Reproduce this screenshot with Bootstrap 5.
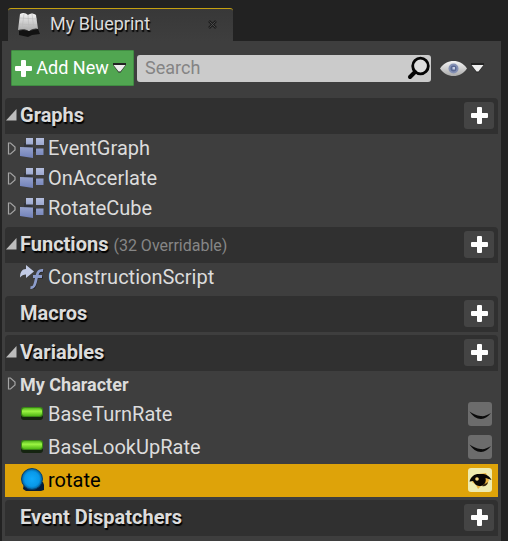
<!DOCTYPE html>
<html lang="en">
<head>
<meta charset="utf-8">
<meta name="viewport" content="width=device-width, initial-scale=1">
<title>My Blueprint</title>
<link href="https://cdn.jsdelivr.net/npm/bootstrap@5.3.0/dist/css/bootstrap.min.css" rel="stylesheet">
<style>
  body { background: #222; color: #dcdcdc; font: 20px/24px Roboto, sans-serif; }
  button { font: inherit; color: inherit; border: 0; padding: 0; background: none; }
  svg { display: block; flex: none; }
  .dock { padding: 8px 7px 0 2px; }
  .dock-tab { width: 225px; height: 33px; margin-left: 6px; background: linear-gradient(#383838, #3e3e3e); border-top: 1px solid #c4a010; border-radius: 3px 3px 0 0; padding: 0 16px 2px 9px; gap: 9px; font-size: 18px; }
  .shadowed { text-shadow: 1px 2px 1px #000; }
  .panel { background: #3e3e3e; padding: 9px 3px 4px; }
  .tools { padding: 0 14px 12px 6px; gap: 3px; font-size: 18px; }
  .add-new { height: 36px; width: 123px; background: #51a651; color: #fff; border: 1px solid #408c42; border-radius: 1px; padding: 0 7px 0 3px; }
  .search-box { height: 27px; background: #cbcbcb; border-radius: 3px; padding: 0 1px 0 8px; }
  .search-box input { border: 0; background: none; outline: 0; padding: 0; min-width: 0; color: #222; }
  .search-box input::placeholder { color: #848484; opacity: 1; }
  .view-options { gap: 4px; margin-left: 6px; }
  .tree { gap: 3px; }
  .section-head { height: 36px; background: #303030; border-radius: 4px 4px 0 0; padding: 0 4px 1px 0; }
  .section-head h2 { font-size: 20px; line-height: 24px; font-weight: 700; margin: 0; padding-bottom: 1px; }
  .overrides { font-size: 16px; color: #868686; margin-left: 5px; padding-top: 2px; }
  .toggle { width: 15px; flex: none; }
  .toggle-open { padding-bottom: 1px; }
  .add-item { width: 30px; height: 27px; background: #444; border-radius: 3px; }
  .item { height: 30px; padding-bottom: 2px; }
  .item-var { height: 33px; padding: 0 6px 2px 0; }
  .item-icon { width: 24px; margin-right: 4px; }
  .group-name { height: 27px; font-size: 18px; font-weight: 700; }
  .group-name .toggle { padding-bottom: 3px; }
  .visible-btn { width: 24px; height: 24px; background: #6c6c6c; border-radius: 3px; }
  .picked { background: #dea309; color: #000; }
  .picked .visible-btn { background: #eeebb0; }
</style>
</head>
<body>
<svg width="0" height="0" class="position-absolute" aria-hidden="true">
  <defs>
    <linearGradient id="blue" x2="0" y2="1"><stop stop-color="#b4bedd"/><stop offset="1" stop-color="#7080b8"/></linearGradient>
    <linearGradient id="silver" x2="0" y2="1"><stop stop-color="#f4f4f4"/><stop offset="1" stop-color="#aaa"/></linearGradient>
    <linearGradient id="green" x2="0" y2="1"><stop stop-color="#58b821"/><stop offset=".4" stop-color="#9cf543"/><stop offset="1" stop-color="#50b815"/></linearGradient>
    <radialGradient id="sphere"><stop stop-color="#11aafa"/><stop offset=".7" stop-color="#0898e8"/><stop offset="1" stop-color="#045e99"/></radialGradient>
    <symbol id="plus" viewBox="0 0 17 17"><path d="M7 0h3q1 0 1 1v5h5q1 0 1 1v3q0 1-1 1h-5v5q0 1-1 1H7q-1 0-1-1v-5H1q-1 0-1-1V7q0-1 1-1h5V1q0-1 1-1z" fill="#fff"/></symbol>
    <symbol id="open" viewBox="0 0 12 12"><path d="M1 11.500 11.500 0v11.500z" fill="#bcbcbc"/></symbol>
    <symbol id="shut" viewBox="0 0 13 13"><path d="M3.500 1v11h2l4.500-4V5L5.500 1z" fill="none" stroke="#a4a4a4" stroke-width="1.200"/></symbol>
    <symbol id="down" viewBox="0 0 13 10"><path d="M0 0h13v2L7.500 9.500h-2L0 2z" fill="#222"/><path d="M.5 2h12L7.500 8.500h-2z" fill="#eee"/></symbol>
    <symbol id="graph" viewBox="0 0 24 20"><path d="M4 5h5l4 5h6v4h-7l-4-4H4z" fill="#30333b"/><path d="M6 0h7v6.500H6zM16 0h8v7h-8zM16 10.500h7.500V17H16zM0 9l13 .5V20L0 18z" fill="url(#blue)"/></symbol>
    <symbol id="closed-eye" viewBox="0 0 24 24"><path d="M1.500 9.500c3 4.500 7 7.500 11.500 7.500 4 0 7-2.500 10-6-4 2.500-7 3.500-10.500 3-4-.5-7-2-11-4.500z" fill="#0b0b0b"/></symbol>
    <symbol id="pill" viewBox="0 0 24 13"><rect x="1" y="2" width="22" height="11" rx="3" fill="#152410"/><rect x="1" width="22" height="10" rx="3" fill="#3a8716"/><rect x="2" y="1" width="20" height="8" rx="3" fill="url(#green)"/></symbol>
  </defs>
</svg>

<main class="dock d-flex flex-column min-vh-100">
  <div class="dock-tab d-flex align-items-center">
    <svg width="24" height="25" viewBox="0 0 24 25"><path d="M2 19l4-1 6 1 9-2 2 5-8 1-4 2-9-2z" fill="#121212"/><path d="M3 2c3-2 6-1 8 1 3-2 5-2 8 0l2 14c-4-1-6 0-9 2-3-2-7-2-11-1z" fill="url(#silver)"/><path d="M11 3l1 16M7 2 5 17M15 2l2 15M3 6l17 1M2 12l18 1" stroke="#bbb" stroke-width=".6" fill="none"/></svg>
    <span class="shadowed">My Blueprint</span>
    <button type="button" class="ms-auto" aria-label="Close"><svg width="9" height="9" viewBox="0 0 9 9"><path d="M1 1l7 7M8 1 1 8" stroke="#1d1d1d" stroke-width="2.500"/><path d="M1.500 1.500l6 6M7.500 1.500l-6 6" stroke="#555" stroke-width=".8"/></svg></button>
  </div>

  <div class="panel flex-grow-1">
    <div class="tools d-flex align-items-center">
      <button type="button" class="add-new d-flex align-items-center justify-content-between flex-shrink-0"><svg width="17" height="17"><use href="#plus"/></svg><span class="text-nowrap">Add New</span><svg width="13" height="10"><use href="#down"/></svg></button>
      <div class="search-box d-flex align-items-center flex-grow-1">
        <input type="text" class="flex-grow-1" placeholder="Search" aria-label="Search">
        <svg width="23" height="24" viewBox="0 0 23 24"><circle cx="13.500" cy="10" r="7.800" fill="#ddd" stroke="#050505" stroke-width="2.800"/><path d="M8 16l-5 5" stroke="#050505" stroke-width="4" stroke-linecap="round"/></svg>
      </div>
      <button type="button" class="view-options d-flex align-items-center" aria-label="View options">
        <svg width="27" height="17" viewBox="0 0 27 17"><path d="M0 8.500C4 3 8 1 13.500 1S23 3 27 8.500C23 14 19 16 13.500 16S4 14 0 8.500z" fill="url(#silver)"/><circle cx="13.500" cy="8.500" r="5" fill="#8490b4"/><circle cx="13.500" cy="8.500" r="3" fill="#5a6993"/><path d="M12.500 7h2.500v2.500h-2.500z" fill="#c6cee2"/></svg>
        <svg width="13" height="10"><use href="#down"/></svg>
      </button>
    </div>

    <div class="tree d-flex flex-column">
      <section>
        <div class="section-head d-flex align-items-center">
          <button type="button" class="toggle toggle-open" aria-label="Collapse Graphs"><svg width="12" height="12"><use href="#open"/></svg></button>
          <h2 class="shadowed">Graphs</h2>
          <button type="button" class="add-item ms-auto d-flex align-items-center justify-content-center" aria-label="Add graph"><svg width="17" height="17"><use href="#plus"/></svg></button>
        </div>
        <div class="item d-flex align-items-center">
          <button type="button" class="toggle" aria-label="Expand EventGraph"><svg width="13" height="13"><use href="#shut"/></svg></button>
          <svg class="item-icon" height="20"><use href="#graph"/></svg><span>EventGraph</span>
        </div>
        <div class="item d-flex align-items-center">
          <button type="button" class="toggle" aria-label="Expand OnAccerlate"><svg width="13" height="13"><use href="#shut"/></svg></button>
          <svg class="item-icon" height="20"><use href="#graph"/></svg><span>OnAccerlate</span>
        </div>
        <div class="item d-flex align-items-center">
          <button type="button" class="toggle" aria-label="Expand RotateCube"><svg width="13" height="13"><use href="#shut"/></svg></button>
          <svg class="item-icon" height="20"><use href="#graph"/></svg><span>RotateCube</span>
        </div>
      </section>

      <section>
        <div class="section-head d-flex align-items-center">
          <button type="button" class="toggle toggle-open" aria-label="Collapse Functions"><svg width="12" height="12"><use href="#open"/></svg></button>
          <h2 class="shadowed">Functions</h2><span class="overrides">(32 Overridable)</span>
          <button type="button" class="add-item ms-auto d-flex align-items-center justify-content-center" aria-label="Add function"><svg width="17" height="17"><use href="#plus"/></svg></button>
        </div>
        <div class="item d-flex align-items-center">
          <span class="toggle"></span>
          <svg class="item-icon" height="24" viewBox="0 0 24 24"><path d="M0 12.500C0 7 2 4 6 4V0l8 6.500L6 13V9.500c-2.500 0-4.500 1-6 3z" fill="#c2cbe6"/><path d="M10 22.500c3 .5 4-1 5-5.500l1.500-6.500C17.500 6 19 5 22.500 5.500M13 11.500h9" transform="translate(1 1)" fill="none" stroke="#222" stroke-width="2"/><path d="M10.500 22.500c3 .5 4-1 5-5.500l1.500-6.500C18 6 19.500 5 23 5.500M13 11.500h9" fill="none" stroke="#8c9cca" stroke-width="2.800"/></svg><span>ConstructionScript</span>
        </div>
      </section>

      <section>
        <div class="section-head d-flex align-items-center">
          <span class="toggle"></span>
          <h2 class="shadowed">Macros</h2>
          <button type="button" class="add-item ms-auto d-flex align-items-center justify-content-center" aria-label="Add macro"><svg width="17" height="17"><use href="#plus"/></svg></button>
        </div>
      </section>

      <section>
        <div class="section-head d-flex align-items-center">
          <button type="button" class="toggle toggle-open" aria-label="Collapse Variables"><svg width="12" height="12"><use href="#open"/></svg></button>
          <h2 class="shadowed">Variables</h2>
          <button type="button" class="add-item ms-auto d-flex align-items-center justify-content-center" aria-label="Add variable"><svg width="17" height="17"><use href="#plus"/></svg></button>
        </div>
        <div class="group-name d-flex align-items-center">
          <button type="button" class="toggle" aria-label="Expand My Character"><svg width="13" height="13"><use href="#shut"/></svg></button><span>My Character</span>
        </div>
        <div class="item-var d-flex align-items-center">
          <span class="toggle"></span>
          <svg class="item-icon" height="13"><use href="#pill"/></svg><span>BaseTurnRate</span>
          <button type="button" class="visible-btn ms-auto" aria-label="Show BaseTurnRate"><svg width="24" height="24"><use href="#closed-eye"/></svg></button>
        </div>
        <div class="item-var d-flex align-items-center">
          <span class="toggle"></span>
          <svg class="item-icon" height="13"><use href="#pill"/></svg><span>BaseLookUpRate</span>
          <button type="button" class="visible-btn ms-auto" aria-label="Show BaseLookUpRate"><svg width="24" height="24"><use href="#closed-eye"/></svg></button>
        </div>
        <div class="item-var picked d-flex align-items-center">
          <span class="toggle"></span>
          <svg class="item-icon" height="23" viewBox="0 0 24 23"><path d="M4 15l19-1 1 3v5l-3 1H6l-3-2z" fill="#071c38"/><circle cx="12" cy="11" r="10.500" fill="url(#sphere)" stroke="#07416d"/></svg><span>rotate</span>
          <button type="button" class="visible-btn ms-auto" aria-label="Hide rotate"><svg width="24" height="24" viewBox="0 0 24 24"><path d="M4 14l4 3 2 4 3-3 6-1 2-5-3-7-8 1z" fill="#eab440"/><path d="M1.500 13.500C3 8 7 5.500 12 6c5-.5 9 1 11.500 6-3-1-4.500-2-6-2 1 4-1 7-4.500 8-5 0-6-2-8-5l-3 .5z" fill="#080603"/><circle cx="9" cy="11" r="1.800" fill="#f6d880"/><path d="M14 18c1-2 4-2 6-4-.5 3-3 5-6 4z" fill="#302410"/></svg></button>
        </div>
      </section>

      <section>
        <div class="section-head d-flex align-items-center">
          <span class="toggle"></span>
          <h2 class="shadowed">Event Dispatchers</h2>
          <button type="button" class="add-item ms-auto d-flex align-items-center justify-content-center" aria-label="Add event dispatcher"><svg width="17" height="17"><use href="#plus"/></svg></button>
        </div>
      </section>
    </div>
  </div>
</main>
<script src="https://cdn.jsdelivr.net/npm/bootstrap@5.3.0/dist/js/bootstrap.bundle.min.js"></script>
</body>
</html>
